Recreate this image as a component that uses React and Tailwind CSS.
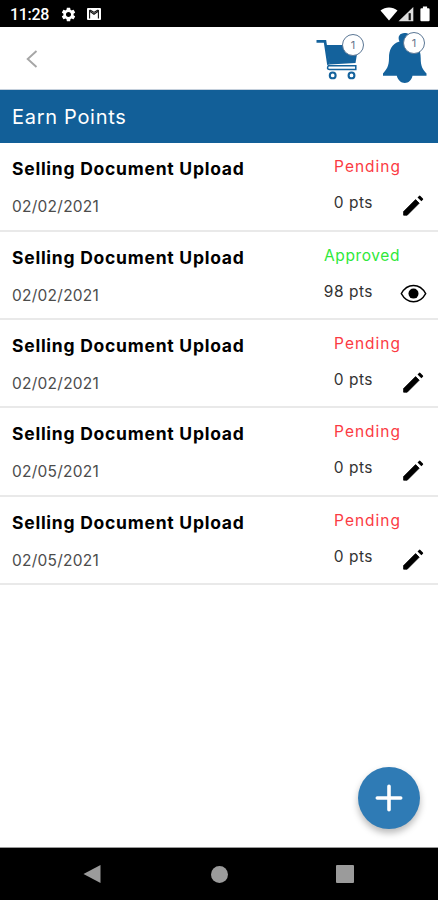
import { MdSettings } from 'react-icons/md'

const items = [
  { title: 'Selling Document Upload', date: '02/02/2021', status: 'Pending', points: 0 },
  { title: 'Selling Document Upload', date: '02/02/2021', status: 'Approved', points: 98 },
  { title: 'Selling Document Upload', date: '02/02/2021', status: 'Pending', points: 0 },
  { title: 'Selling Document Upload', date: '02/05/2021', status: 'Pending', points: 0 },
  { title: 'Selling Document Upload', date: '02/05/2021', status: 'Pending', points: 0 },
]

function StatusBar() {
  return (
    <div className="h-[27px] shrink-0 bg-black flex items-center pl-[10px] pr-[8px] text-white">
      <span className="w-[39px] whitespace-nowrap font-['Roboto',sans-serif] font-medium text-[16px] leading-none tracking-[-0.3px] mt-[2px]">
        11:28
      </span>
      <MdSettings className="w-[17px] h-[17px] ml-[11px] mt-[1px]" />
      <svg className="w-[14px] h-[12px] ml-[10px] mt-[1px]" viewBox="0 0 14 12">
        <rect width="14" height="12" rx="1" fill="#fff" />
        <path d="M2.6 10.5V3L7 6.3 11.4 3v7.5M2.6 2.2h1L7 4.4l3.4-2.2h1" fill="none" stroke="#111" strokeWidth="1.1" />
      </svg>
      {/* wifi, signal, battery */}
      <svg className="w-[50px] h-[16px] ml-auto" viewBox="0 0 50 16">
        <path d="M0.5 4.6C5.5.6 12.5.6 17.5 4.6L9 14.6z" fill="#fff" />
        <path d="M18.5 15.2 33.3 1v14.2z" fill="#ddd" />
        <path d="M28.6 7.2h2.2v7h-2.2z" fill="#111" />
        <path d="M42.9.6h4.2v1.6h1.4q1.1 0 1.1 1.1v10.9q0 1-1.1 1h-7q-1.1 0-1.1-1V3.3q0-1.1 1.1-1.1h1.4z" fill="#fff" />
      </svg>
    </div>
  )
}

function CountBadge({ className }) {
  return (
    <span
      className={`absolute w-[22px] h-[22px] rounded-full bg-white border border-[#5b7795] flex items-center justify-center text-[11px] leading-none text-[#66748a] ${className}`}
    >
      1
    </span>
  )
}

function TopBar() {
  return (
    <header className="h-[63px] shrink-0 flex items-start border-b border-[#c5d0dc] pl-[26px] pr-[10px]">
      <svg className="w-[12px] h-[18px] mt-[23px]" viewBox="0 0 12 18" fill="none" stroke="#a6a6a6" strokeWidth="1.9">
        <path d="M10.5 1 1.7 9l8.8 8" />
      </svg>
      <div className="relative ml-auto w-[50px] h-[63px]">
        <svg className="w-[50px] h-[63px]" viewBox="0 0 50 63" fill="none" stroke="#14629c">
          <path d="M0.5 14.3H9l3.5 23.5" strokeWidth="2.7" />
          <path d="M10 18h32.5L39.5 36 13.5 37.6z" fill="#14629c" stroke="none" />
          <path d="M12.5 38.3q-2.4 4.2 1 4.2h26.3v-3.7H12.5" strokeWidth="1.5" />
          <circle cx="16.7" cy="48.4" r="2.9" strokeWidth="2.1" />
          <circle cx="35.5" cy="48.4" r="2.9" strokeWidth="2.1" />
        </svg>
        <CountBadge className="left-[26px] top-[7px]" />
      </div>
      <div className="relative w-[46px] h-[63px] ml-[16px]">
        <svg className="w-[46px] h-[63px]" viewBox="0 0 46 63" fill="#14629c">
          <path d="M17.5 14.5C15 9.5 18 6 22.5 6S30 8.5 27.5 14.5C36 17 38.7 23 38.7 31c0 8.5 2 11.5 5.8 15.5v2.3H30.5c-1 4.7-4 7.2-7.7 7.2s-6.8-2.5-8-7.2H1v-2.3c3.5-4 6-7 6-15.5 0-8 2.5-14 10.5-16.5z" />
        </svg>
        <CountBadge className="left-[21px] top-[5px]" />
      </div>
    </header>
  )
}

function EyeIcon() {
  return (
    <svg className="w-[27px] h-[27px]" viewBox="0 0 27 27">
      <path
        d="M1.3 12.6C7.3 1.8 19.7 1.8 25.7 12.6 19.7 23.4 7.3 23.4 1.3 12.6z"
        fill="none"
        stroke="#000"
        strokeWidth="1.4"
      />
      <circle cx="13.5" cy="12.6" r="5" fill="#000" />
    </svg>
  )
}

function PencilIcon() {
  return (
    <svg className="w-[27px] h-[27px]" viewBox="0 0 27 27">
      <path d="M3.6 23.2V19.6L15.6 7.6l3.6 3.6L7.2 23.2z" fill="#000" stroke="#000" strokeWidth=".8" strokeLinejoin="round" />
      <path d="M17.5 5.4 19 3.9q.7-.7 1.4 0l2.5 2.5q.7.7 0 1.4l-1.5 1.5z" fill="#000" />
    </svg>
  )
}

function PointsRow({ item }) {
  const approved = item.status === 'Approved'

  return (
    <li className="h-[88.4px] flex border-b-2 border-[#e9e9e9] pl-[12px]">
      <div className="flex-1 pt-[15px]">
        <h2 className="text-[17.5px] leading-[22px] font-bold text-black whitespace-nowrap tracking-[0.75px]">{item.title}</h2>
        <p className="text-[15.5px] leading-[20px] mt-[17px] tracking-[0.25px] text-[#4c4c4c]">{item.date}</p>
      </div>
      <div className="w-[126px] shrink-0 pt-[13px]">
        <p
          className={`text-[15.5px] leading-[22px] text-right ${
            approved ? 'pr-[38px] text-[#2fe83a] tracking-[0.6px]' : 'pr-[37px] text-[#fb3a43] tracking-[1px]'
          }`}
        >
          {item.status}
        </p>
        <div className="flex items-start pt-[14px]">
          <p className="flex-1 text-[15.5px] leading-[22px] text-right whitespace-nowrap tracking-[0.5px] text-[#333]">
            {item.points} pts
          </p>
          <div className="w-[27px] ml-[27px] mr-[11px]">
            {approved ? <EyeIcon /> : <PencilIcon />}
          </div>
        </div>
      </div>
    </li>
  )
}

function NavBar() {
  return (
    <div className="h-[52px] shrink-0 bg-black flex items-center justify-between pl-[83px] pr-[84px]">
      <svg className="w-[18px] h-[18px]" viewBox="0 0 18 18" fill="#9b9b9b">
        <path d="M0.5 9 17.5 0v18z" />
      </svg>
      <span className="w-[17px] h-[17px] ml-px rounded-full bg-[#9b9b9b]" />
      <span className="w-[18px] h-[18px] rounded-[1px] bg-[#9b9b9b]" />
    </div>
  )
}

export default function App() {
  return (
    <div className="w-full h-screen flex flex-col overflow-hidden bg-white font-['Inter',sans-serif]">
      <StatusBar />
      <TopBar />
      <h1 className="h-[53px] shrink-0 bg-[#125f98] text-white text-[20px] leading-[54px] pl-[12px] tracking-[0.7px]">
        Earn Points
      </h1>

      <main className="flex-1 min-h-0 relative border-b border-[#999]">
        <ul className="pt-[0.2px]">
          {items.map((item, i) => (
            <PointsRow key={i} item={item} />
          ))}
        </ul>

        {/* Add button */}
        <button className="absolute right-[18px] bottom-[18px] w-[62px] h-[62px] rounded-full bg-[#2f7bb5] shadow-[0_4px_7px_rgba(0,0,0,0.28)] flex items-center justify-center">
          <svg className="w-[28px] h-[28px]" viewBox="0 0 28 28" stroke="#fff" strokeWidth="3.6" strokeLinecap="round">
            <path d="M14 2.3v23.4M2.3 14h23.4" />
          </svg>
        </button>
      </main>

      <NavBar />
    </div>
  )
}
